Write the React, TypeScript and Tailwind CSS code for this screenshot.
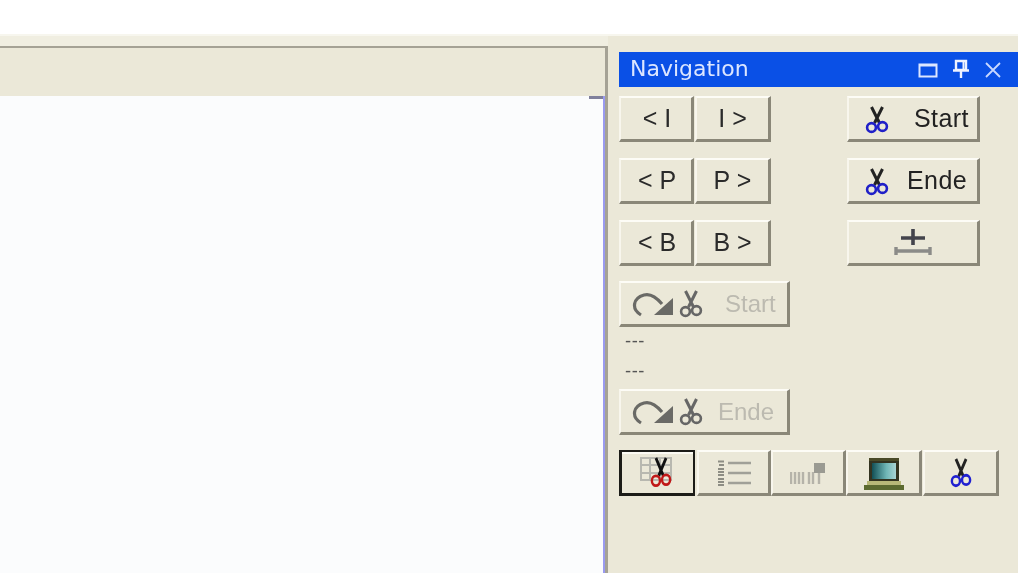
const LABEL = "font-['Liberation_Sans',Arial,sans-serif]";

function Scissors({ ring = "#2020c8", blade = "#222", className = "w-[26px] h-[28px]" }: { ring?: string; blade?: string; className?: string }) {
  return (
    <svg viewBox="0 0 26 28" preserveAspectRatio="none" className={className} fill="none">
      <path d="M7.5 1 L15.5 17 M18.5 1 L10.5 17" stroke={blade} strokeWidth="3" />
      <circle cx="7.5" cy="21.5" r="4.4" stroke={ring} strokeWidth="2.6" />
      <circle cx="18.5" cy="20.5" r="4.4" stroke={ring} strokeWidth="2.6" />
    </svg>
  );
}

function CurveArrow() {
  return (
    <svg viewBox="0 0 44 26" className="w-[44px] h-[26px]" fill="none">
      <path d="M10 24 C0 18 2 7 13 4 C20 2 26 7 31 13" stroke="#6a6a66" strokeWidth="3.2" />
      <path d="M42 7 L42 24 L23 24 Z" fill="#6a6a66" />
    </svg>
  );
}

function Btn({ className = "", children, active = false }: { className?: string; children?: React.ReactNode; active?: boolean }) {
  return (
    <div
      className={`flex items-center justify-center h-[46px] bg-[#ebe8d8] border-solid ${LABEL} ${
        active
          ? "border-2 border-b-[3px] border-l-[3px] border-[#1c1c18] shadow-[inset_0_2px_0_#fbfaf3]"
          : "border-t-2 border-l-2 border-r-[3px] border-b-[3px] border-t-[#fdfcf6] border-l-[#f8f6ed] border-r-[#8a8778] border-b-[#8a8778]"
      } ${className}`}
    >
      {children}
    </div>
  );
}

function TextPair({ left, right }: { left: string; right: string }) {
  return (
    <div className="flex gap-px">
      <Btn className="w-[75px] pl-[2px] text-[25px] text-[#2a2a2a]">{left}</Btn>
      <Btn className="w-[76px] text-[25px] text-[#2a2a2a]">{right}</Btn>
    </div>
  );
}

function CutBtn({ label, gap }: { label: string; gap: string }) {
  return (
    <Btn className={`w-[133px] justify-start text-[25px] tracking-[0.4px] text-[#222] pl-[15px] ${gap}`}>
      <Scissors className="w-[26px] h-[28px] mt-[3px] shrink-0" />
      <span>{label}</span>
    </Btn>
  );
}

function GotoBtn({ label, gap, className }: { label: string; gap: string; className?: string }) {
  return (
    <Btn className={`w-[171px] justify-start pl-[10px] text-[24px] text-[#bcbab0] ${gap} ${className}`}>
      <span className="flex items-center gap-[3px] shrink-0">
        <CurveArrow />
        <Scissors ring="#666" blade="#666" className="w-[26px] h-[28px]" />
      </span>
      <span>{label}</span>
    </Btn>
  );
}

export default function App() {
  return (
    <div className="font-['DejaVu_Sans',Verdana,sans-serif] w-[1018px] h-[573px] overflow-hidden flex flex-col bg-[#ebe8d8] blur-[0.6px]">
      <div className="h-[34px] shrink-0 bg-white" />
      <div className="h-[2px] shrink-0 bg-[#f7f6ee]" />
      <div className="flex flex-1 min-h-0">
        {/* linke Seite */}
        <div className="w-[608px] shrink-0 flex flex-col pt-[10px] bg-[#f0eee1]">
          <div className="flex-1 flex flex-col border-t-2 border-r-[3px] border-t-[#a5a295] border-r-[#a5a295]">
            <div className="h-[48px] shrink-0 bg-[#ebe8d8]" />
            <div className="flex-1 bg-[#fbfcfd] border-r-2 border-r-[#9a9af0] relative">
              <div className="absolute right-0 top-0 w-[14px] h-[3px] bg-[#80809c]" />
            </div>
          </div>
        </div>

        {/* Navigation */}
        <div className="flex-1 pl-[11px] pt-[16px]">
          <div className="h-[35px] bg-[#0a50e6] flex items-center justify-between pl-[11px] pr-[16px] text-[#dce6ff] text-[22px]">
            <span className="-mt-[3px]">Navigation</span>
            <div className="flex items-center gap-[14px]">
              <svg viewBox="0 0 20 16" className="w-[20px] h-[16px]" fill="none">
                <rect x="1.5" y="2.5" width="17" height="12" stroke="#dce6ff" strokeWidth="2" />
                <path d="M1 3.5H19" stroke="#dce6ff" strokeWidth="2" />
              </svg>
              <svg viewBox="0 0 18 20" className="w-[18px] h-[20px] -mt-[1px]" fill="none">
                <path d="M4 2H14V11H4Z M1 11.5H17 M9 11.5V19" stroke="#eef2ff" strokeWidth="2.4" />
                <path d="M11.5 3V10" stroke="#eef2ff" strokeWidth="2" />
              </svg>
              <svg viewBox="0 0 18 18" className="w-[18px] h-[18px]" fill="none">
                <path d="M2 2L16 16M16 2L2 16" stroke="#c9d8ff" strokeWidth="1.8" />
              </svg>
            </div>
          </div>

          <div className="flex flex-col mt-[9px]">
            <div className="flex justify-between w-[361px]">
              <TextPair left="< I" right="I >" />
              <CutBtn label="Start" gap="gap-[24px]" />
            </div>
            <div className="flex justify-between w-[361px] mt-[16px]">
              <TextPair left="< P" right="P >" />
              <CutBtn label="Ende" gap="gap-[17px]" />
            </div>
            <div className="flex justify-between w-[361px] mt-[16px]">
              <TextPair left="< B" right="B >" />
              <Btn className="w-[133px]">
                <svg viewBox="0 0 40 30" className="w-[40px] h-[30px]" fill="none">
                  <path d="M20 1V17M8 10H32" stroke="#44444c" strokeWidth="3.6" />
                  <path d="M3 23H37M3 19V27M37 19V27" stroke="#8b8b88" strokeWidth="3.4" />
                </svg>
              </Btn>
            </div>

            <GotoBtn label="Start" gap="gap-[21px]" className="mt-[15px]" />
            <div className="h-[30px] text-[#555] text-[17px] tracking-[0.5px] leading-[27px] pl-[6px]">---</div>
            <div className="h-[32px] text-[#555] text-[17px] tracking-[0.5px] leading-[27px] pl-[6px]">---</div>
            <GotoBtn label="Ende" gap="gap-[14px]" />

            <div className="flex mt-[15px]">
              <Btn active className="w-[76px] mr-[2px]">
                <span className="relative w-[32px] h-[32px] -ml-[4px] flex items-center justify-center">
                  <svg viewBox="0 0 32 24" className="absolute top-0 left-0 w-[32px] h-[24px]" fill="none">
                    <path d="M1 1H31V23H1Z M1 8H31 M1 16H31 M10 1V23 M20 1V23" stroke="#b8b8b0" strokeWidth="2" />
                  </svg>
                  <Scissors ring="#c01818" blade="#111" className="relative left-[5px] w-[24px] h-[31px]" />
                </span>
              </Btn>
              <Btn className="w-[74px]">
                <svg viewBox="0 0 36 26" className="w-[36px] h-[26px]" fill="none">
                  <path d="M2 1.5H8M3 5H8M2 9H8M2 12H8M2 15H8M2 19H8M2 22H8M2 25H8" stroke="#8d8d84" strokeWidth="2" />
                  <path d="M12 3H35M12 13H35M12 23H35" stroke="#a0a098" strokeWidth="2.6" />
                </svg>
              </Btn>
              <Btn className="w-[75px]">
                <svg viewBox="0 0 36 24" className="w-[36px] h-[24px]" fill="none">
                  <path d="M1 11V23M5 11V23M9 11V23M13 11V23M19 11V23M23 11V23M29 11V23" stroke="#b5b3a9" strokeWidth="2.4" />
                  <rect x="24" y="2" width="11" height="10" fill="#9a9a92" />
                </svg>
              </Btn>
              <Btn className="w-[76px] mr-[1px]">
                <svg viewBox="0 0 40 32" className="w-[40px] h-[32px] mt-[2px]">
                  <defs>
                    <linearGradient id="screen" x1="0" x2="1" y1="0" y2="0">
                      <stop offset="0" stopColor="#124f55" />
                      <stop offset="0.6" stopColor="#6fb6b6" />
                      <stop offset="1" stopColor="#a9d4d4" />
                    </linearGradient>
                  </defs>
                  <rect x="5" y="0" width="30" height="3" fill="#4a4a28" />
                  <rect x="5" y="3" width="30" height="20" fill="#333320" />
                  <rect x="8" y="5" width="24" height="16" fill="url(#screen)" />
                  <rect x="3" y="23" width="34" height="4" fill="#b8b878" />
                  <rect x="0" y="27" width="40" height="5" fill="#5c6a30" />
                </svg>
              </Btn>
              <Btn className="w-[76px]">
                <Scissors ring="#2020d0" blade="#222" className="w-[24px] h-[30px]" />
              </Btn>
            </div>
          </div>
        </div>
      </div>
    </div>
  );
}
